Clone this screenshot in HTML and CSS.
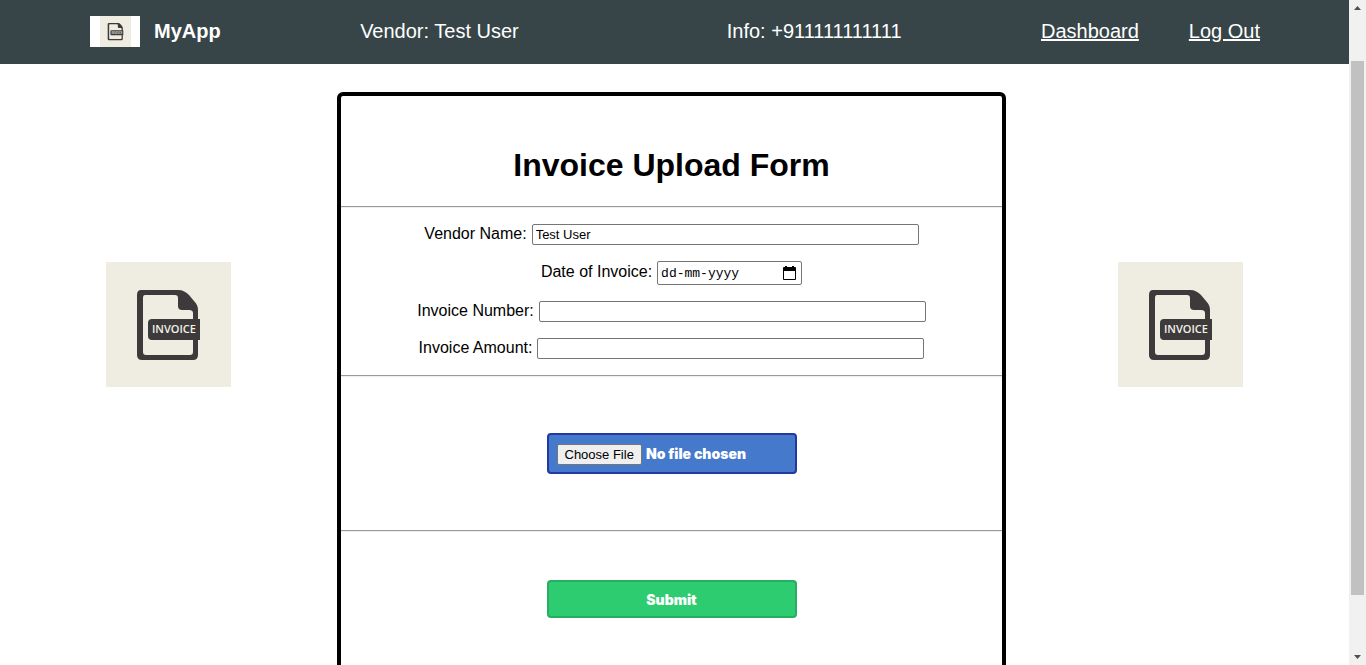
FILE: index.html
```html
<!DOCTYPE html>
<html lang="en">
<head>
<meta charset="utf-8">
<meta name="viewport" content="width=device-width, initial-scale=1">
<title>Invoice Upload Form</title>
<link rel="stylesheet" href="styles.css">
</head>
<body>
<div class="window">
  <div class="page">
    <header class="navbar">
      <div class="brand">
        <span class="logo">
          <svg class="logo-icon" viewBox="0 0 125 125" role="img" aria-label="Invoice">
            <path fill="#3d3a3c" fill-rule="evenodd" d="M35 28H72C77 28 80 30 83 33L88 39C91 42 92 45 92 48V57H94V78H92V93Q92 98 87 98H36Q31 98 31 93V33Q31 28 35 28ZM39 33Q37 33 37 36V90Q37 93 40 93H84Q87 93 87 90V78H46Q42 78 42 74V61Q42 57 46 57H87V51Q87 48 83 48H76Q72 48 72 44V36Q72 33 69 33Z"/>
            <text class="icon-text" x="68" y="71" text-anchor="middle">INVOICE</text>
          </svg>
        </span>
        <strong>MyApp</strong>
      </div>
      <div class="details"><span>Vendor: Test User</span><span>Info: +911111111111</span></div>
      <nav class="links"><a href="#dashboard">Dashboard</a><a href="#logout">Log Out</a></nav>
    </header>
    <main class="content">
      <svg class="picture" viewBox="0 0 125 125" role="img" aria-label="Invoice">
        <path fill="#3d3a3c" fill-rule="evenodd" d="M35 28H72C77 28 80 30 83 33L88 39C91 42 92 45 92 48V57H94V78H92V93Q92 98 87 98H36Q31 98 31 93V33Q31 28 35 28ZM39 33Q37 33 37 36V90Q37 93 40 93H84Q87 93 87 90V78H46Q42 78 42 74V61Q42 57 46 57H87V51Q87 48 83 48H76Q72 48 72 44V36Q72 33 69 33Z"/>
        <text class="icon-text" x="68" y="71" text-anchor="middle">INVOICE</text>
      </svg>
      <form class="form">
        <h1>Invoice Upload Form</h1>
        <hr>
        <div class="fields">
          <div class="field"><label for="vendor">Vendor Name:</label><input class="text" id="vendor" type="text" value="Test User"></div>
          <div class="field">
            <label for="date">Date of Invoice:</label>
            <span class="date">
              <input class="date-text" id="date" type="text" placeholder="dd-mm-yyyy">
              <button class="date-button" type="button" aria-label="Show date picker">
                <svg class="calendar" viewBox="0 0 13 14"><path fill="#000" fill-rule="evenodd" d="M2 0H4V1H9V0H11V1H12Q13 1 13 2V13Q13 14 12 14H1Q0 14 0 13V2Q0 1 1 1H2ZM1 5V13H12V5Z"/></svg>
              </button>
            </span>
          </div>
          <div class="field"><label for="number">Invoice Number:</label><input class="text" id="number" type="text"></div>
          <div class="field"><label for="amount">Invoice Amount:</label><input class="text" id="amount" type="text"></div>
        </div>
        <hr>
        <div class="upload"><input class="file" type="file" aria-label="Invoice file"></div>
        <hr>
        <div class="actions"><button class="submit" type="submit">Submit</button></div>
      </form>
      <svg class="picture" viewBox="0 0 125 125" role="img" aria-label="Invoice">
        <path fill="#3d3a3c" fill-rule="evenodd" d="M35 28H72C77 28 80 30 83 33L88 39C91 42 92 45 92 48V57H94V78H92V93Q92 98 87 98H36Q31 98 31 93V33Q31 28 35 28ZM39 33Q37 33 37 36V90Q37 93 40 93H84Q87 93 87 90V78H46Q42 78 42 74V61Q42 57 46 57H87V51Q87 48 83 48H76Q72 48 72 44V36Q72 33 69 33Z"/>
        <text class="icon-text" x="68" y="71" text-anchor="middle">INVOICE</text>
      </svg>
    </main>
  </div>
  <div class="scrollbar" aria-hidden="true">
    <svg class="arrow" viewBox="0 0 17 17"><path fill="#505050" d="M5 10L8.5 6L12 10Z"/></svg>
    <div class="track"><div class="thumb"></div></div>
    <svg class="arrow" viewBox="0 0 17 17"><path fill="#505050" d="M5 7L8.5 11L12 7Z"/></svg>
  </div>
</div>
</body>
</html>
```
FILE: styles.css
```css
* { box-sizing: border-box; }

body {
  margin: 0;
  font: 16px/20px "Liberation Sans", Arial, sans-serif;
  color: #000;
  background: #fff;
}

.icon-text { font: 600 11px "Open Sans", sans-serif; fill: #f4f2e8; }

.window { display: flex; height: 100vh; overflow: hidden; }
.page { flex: 1; min-width: 0; overflow: hidden; }

.navbar {
  display: flex;
  justify-content: space-between;
  align-items: center;
  height: 64px;
  padding: 0 89px 2px 90px;
  background: #374549;
  color: #fff;
  font-size: 20px;
}
.brand { display: flex; align-items: center; gap: 14px; }
.logo { display: flex; justify-content: center; width: 50px; height: 31px; background: #fff; }
.logo-icon { width: 31px; height: 31px; background: #efede1; }
.details { display: flex; gap: 208px; }
.links { display: flex; gap: 50px; }
.links a { color: #fff; }

.content { display: grid; grid-template-columns: 1fr 2fr 1fr; align-items: start; padding-top: 28px; }
.picture { width: 125px; height: 125px; margin-top: 170px; justify-self: center; background: #efede1; }

.form { margin-right: 6px; border: 4px solid #000; border-radius: 6px; padding-top: 51px; }
.form h1 { margin: 0 0 23px; font-size: 32px; line-height: 36px; text-align: center; }
.form hr { margin: 0; border: 0; border-top: 1px solid #9a9a9a; border-bottom: 1px solid #eee; }

.fields { display: flex; flex-direction: column; gap: 16px; padding: 16px 0; }
.field { display: flex; justify-content: center; align-items: center; gap: 5px; }
.field label { line-height: 18px; padding-bottom: 2px; }
.text {
  width: 387px;
  height: 21px;
  padding: 1px 3px;
  border: 1px solid #767676;
  border-radius: 2px;
  font: 13px "Liberation Sans", Arial, sans-serif;
}
.date {
  display: flex;
  align-items: center;
  width: 145px;
  height: 24px;
  padding: 0 5px 0 3px;
  border: 1px solid #767676;
  border-radius: 2px;
}
.date-text {
  flex: 1;
  min-width: 0;
  padding: 0;
  border: 0;
  background: transparent;
  font: 13px "Liberation Mono", monospace;
}
.date-text::placeholder { color: #000; opacity: 1; }
.date-button { display: flex; padding: 0; border: 0; background: none; }
.calendar { width: 13px; height: 14px; }

.upload { display: flex; justify-content: center; padding: 56px 0; }
.file {
  width: 250px;
  height: 41px;
  padding: 8px;
  border: 2px solid #2338a0;
  border-radius: 4px;
  background: #4479cc;
  color: #fff;
  font: 900 14px/21px Inter, sans-serif;
}
.file::file-selector-button {
  height: 21px;
  margin-right: 4px;
  padding: 0 7px;
  border: 1px solid #767676;
  border-radius: 2px;
  background: #efefef;
  color: #000;
  font: 13px "Liberation Sans", Arial, sans-serif;
}

.actions { display: flex; justify-content: center; padding: 48px 0 88px; }
.submit {
  width: 250px;
  height: 38px;
  border: 2px solid #27ae60;
  border-radius: 4px;
  background: #2ecc71;
  color: #fff;
  font: 900 14px Inter, sans-serif;
}

.scrollbar { display: flex; flex-direction: column; width: 17px; background: #f1f1f1; }
.arrow { width: 17px; height: 17px; }
.track { flex: 1; padding: 44px 2px 0; }
.thumb { height: 91%; background: #c1c1c1; }
```
